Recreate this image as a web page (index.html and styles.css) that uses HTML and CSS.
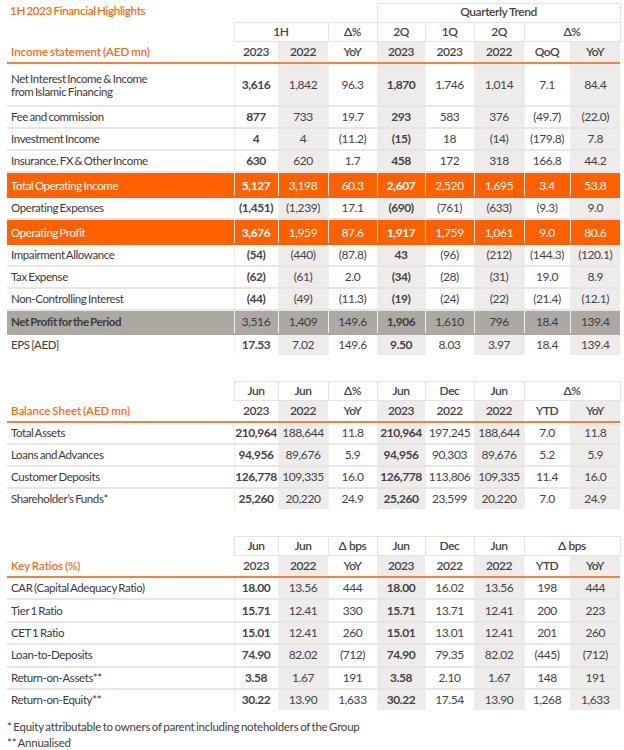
FILE: index.html
```html
<!DOCTYPE html>
<html>
<head>
<meta charset="utf-8">
<link rel="stylesheet" href="styles.css">
</head>
<body>
<div class="page">
<table class="fin">
  <colgroup>
    <col class="c-lbl"><col class="c-a"><col class="c-b"><col class="c-c"><col class="c-d"><col class="c-e"><col class="c-f"><col class="c-g"><col class="c-h">
  </colgroup>
  <tr class="hd1">
    <td colspan="4" class="title">1H 2023 Financial Highlights</td>
    <td colspan="5" class="hbox">Quarterly Trend</td>
  </tr>
  <tr class="hd2">
    <td class="lbl"></td>
    <td colspan="2" class="hbox">1H</td>
    <td class="hbox">Δ%</td>
    <td class="hbox">2Q</td>
    <td class="hbox">1Q</td>
    <td class="hbox">2Q</td>
    <td colspan="2" class="hbox">Δ%</td>
  </tr>
  <tr class="hd3">
    <td class="lbl sect">Income statement (AED mn)</td>
    <td>2023</td><td class="g">2022</td><td>YoY</td><td class="g">2023</td><td>2023</td><td class="g">2022</td><td>QoQ</td><td class="g">YoY</td>
  </tr>
  <tr class="row tall">
    <td class="lbl">Net Interest Income &amp; Income<br>from Islamic Financing</td>
    <td class="b">3,616</td><td class="g">1,842</td><td>96.3</td><td class="g b">1,870</td><td>1.746</td><td class="g">1,014</td><td>7.1</td><td class="g">84.4</td>
  </tr>
  <tr class="row">
    <td class="lbl">Fee and commission</td>
    <td class="b">877</td><td class="g">733</td><td>19.7</td><td class="g b">293</td><td>583</td><td class="g">376</td><td>(49.7)</td><td class="g">(22.0)</td>
  </tr>
  <tr class="row">
    <td class="lbl">Investment Income</td>
    <td class="b">4</td><td class="g">4</td><td>(11.2)</td><td class="g b">(15)</td><td>18</td><td class="g">(14)</td><td>(179.8)</td><td class="g">7.8</td>
  </tr>
  <tr class="row">
    <td class="lbl">Insurance, FX &amp; Other Income</td>
    <td class="b">630</td><td class="g">620</td><td>1.7</td><td class="g b">458</td><td>172</td><td class="g">318</td><td>166.8</td><td class="g">44.2</td>
  </tr>
  <tr class="row hi">
    <td class="lbl">Total Operating Income</td>
    <td class="b">5,127</td><td>3,198</td><td>60.3</td><td class="b">2,607</td><td>2,520</td><td>1,695</td><td>3.4</td><td>53.8</td>
  </tr>
  <tr class="row">
    <td class="lbl">Operating Expenses</td>
    <td class="b">(1,451)</td><td class="g">(1,239)</td><td>17.1</td><td class="g b">(690)</td><td>(761)</td><td class="g">(633)</td><td>(9.3)</td><td class="g">9.0</td>
  </tr>
  <tr class="row hi">
    <td class="lbl">Operating Profit</td>
    <td class="b">3,676</td><td>1,959</td><td>87.6</td><td class="b">1,917</td><td>1,759</td><td>1,061</td><td>9.0</td><td>80.6</td>
  </tr>
  <tr class="row">
    <td class="lbl">Impairment Allowance</td>
    <td class="b">(54)</td><td class="g">(440)</td><td>(87.8)</td><td class="g b">43</td><td>(96)</td><td class="g">(212)</td><td>(144.3)</td><td class="g">(120.1)</td>
  </tr>
  <tr class="row">
    <td class="lbl">Tax Expense</td>
    <td class="b">(62)</td><td class="g">(61)</td><td>2.0</td><td class="g b">(34)</td><td>(28)</td><td class="g">(31)</td><td>19.0</td><td class="g">8.9</td>
  </tr>
  <tr class="row">
    <td class="lbl">Non-Controlling Interest</td>
    <td class="b">(44)</td><td class="g">(49)</td><td>(11.3)</td><td class="g b">(19)</td><td>(24)</td><td class="g">(22)</td><td>(21.4)</td><td class="g">(12.1)</td>
  </tr>
  <tr class="row net">
    <td class="lbl">Net Profit for the Period</td>
    <td>3,516</td><td>1,409</td><td>149.6</td><td class="b">1,906</td><td>1,610</td><td>796</td><td>18.4</td><td>139.4</td>
  </tr>
  <tr class="row last">
    <td class="lbl">EPS [AED]</td>
    <td class="b">17.53</td><td class="g">7.02</td><td>149.6</td><td class="g b">9.50</td><td>8.03</td><td class="g">3.97</td><td>18.4</td><td class="g">139.4</td>
  </tr>
</table>

<table class="fin sec2">
  <colgroup>
    <col class="c-lbl"><col class="c-a"><col class="c-b"><col class="c-c"><col class="c-d"><col class="c-e"><col class="c-f"><col class="c-g"><col class="c-h">
  </colgroup>
  <tr class="hd2">
    <td class="lbl"></td>
    <td class="hbox">Jun</td><td class="hbox">Jun</td><td class="hbox">Δ%</td><td class="hbox">Jun</td><td class="hbox">Dec</td><td class="hbox">Jun</td><td colspan="2" class="hbox">Δ%</td>
  </tr>
  <tr class="hd3">
    <td class="lbl sect">Balance Sheet (AED mn)</td>
    <td>2023</td><td class="g">2022</td><td>YoY</td><td class="g">2023</td><td>2022</td><td class="g">2022</td><td>YTD</td><td class="g">YoY</td>
  </tr>
  <tr class="row">
    <td class="lbl">Total Assets</td>
    <td class="b">210,964</td><td class="g">188,644</td><td>11.8</td><td class="g b">210,964</td><td>197,245</td><td class="g">188,644</td><td>7.0</td><td class="g">11.8</td>
  </tr>
  <tr class="row">
    <td class="lbl">Loans and Advances</td>
    <td class="b">94,956</td><td class="g">89,676</td><td>5.9</td><td class="g b">94,956</td><td>90,303</td><td class="g">89,676</td><td>5.2</td><td class="g">5.9</td>
  </tr>
  <tr class="row">
    <td class="lbl">Customer Deposits</td>
    <td class="b">126,778</td><td class="g">109,335</td><td>16.0</td><td class="g b">126,778</td><td>113,806</td><td class="g">109,335</td><td>11.4</td><td class="g">16.0</td>
  </tr>
  <tr class="row last">
    <td class="lbl">Shareholder’s Funds*</td>
    <td class="b">25,260</td><td class="g">20,220</td><td>24.9</td><td class="g b">25,260</td><td>23,599</td><td class="g">20,220</td><td>7.0</td><td class="g">24.9</td>
  </tr>
</table>

<table class="fin sec3">
  <colgroup>
    <col class="c-lbl"><col class="c-a"><col class="c-b"><col class="c-c"><col class="c-d"><col class="c-e"><col class="c-f"><col class="c-g"><col class="c-h">
  </colgroup>
  <tr class="hd2">
    <td class="lbl"></td>
    <td class="hbox">Jun</td><td class="hbox">Jun</td><td class="hbox">Δ bps</td><td class="hbox">Jun</td><td class="hbox">Dec</td><td class="hbox">Jun</td><td colspan="2" class="hbox">Δ bps</td>
  </tr>
  <tr class="hd3">
    <td class="lbl sect">Key Ratios (%)</td>
    <td>2023</td><td class="g">2022</td><td>YoY</td><td class="g">2023</td><td>2022</td><td class="g">2022</td><td>YTD</td><td class="g">YoY</td>
  </tr>
  <tr class="row">
    <td class="lbl">CAR (Capital Adequacy Ratio)</td>
    <td class="b">18.00</td><td class="g">13.56</td><td>444</td><td class="g b">18.00</td><td>16.02</td><td class="g">13.56</td><td>198</td><td class="g">444</td>
  </tr>
  <tr class="row">
    <td class="lbl">Tier 1 Ratio</td>
    <td class="b">15.71</td><td class="g">12.41</td><td>330</td><td class="g b">15.71</td><td>13.71</td><td class="g">12.41</td><td>200</td><td class="g">223</td>
  </tr>
  <tr class="row">
    <td class="lbl">CET 1 Ratio</td>
    <td class="b">15.01</td><td class="g">12.41</td><td>260</td><td class="g b">15.01</td><td>13.01</td><td class="g">12.41</td><td>201</td><td class="g">260</td>
  </tr>
  <tr class="row">
    <td class="lbl">Loan-to-Deposits</td>
    <td class="b">74.90</td><td class="g">82.02</td><td>(712)</td><td class="g b">74.90</td><td>79.35</td><td class="g">82.02</td><td>(445)</td><td class="g">(712)</td>
  </tr>
  <tr class="row">
    <td class="lbl">Return-on-Assets**</td>
    <td class="b">3.58</td><td class="g">1.67</td><td>191</td><td class="g b">3.58</td><td>2.10</td><td class="g">1.67</td><td>148</td><td class="g">191</td>
  </tr>
  <tr class="row last">
    <td class="lbl">Return-on-Equity**</td>
    <td class="b">30.22</td><td class="g">13.90</td><td>1,633</td><td class="g b">30.22</td><td>17.54</td><td class="g">13.90</td><td>1,268</td><td class="g">1,633</td>
  </tr>
</table>

<div class="notes">
  <p>* Equity attributable to owners of parent including noteholders of the Group</p>
  <p>** Annualised</p>
</div>
</div>
</body>
</html>
```

FILE: styles.css
```css
body {
  margin: 0;
  background: #ffffff;
  font-family: Lato, "Open Sans", sans-serif;
  color: #3f3f3f;
}
.page {
  padding: 3px 4px 0 7px;
}
.fin {
  border-collapse: collapse;
  table-layout: fixed;
  width: 613px;
}
.c-lbl { width: 227px; }
.c-a { width: 44px; }
.c-b { width: 50px; }
.c-c { width: 49px; }
.c-d { width: 48px; }
.c-e { width: 49px; }
.c-f { width: 50px; }
.c-g { width: 46px; }
.c-h { width: 50px; }

.fin td {
  padding: 0;
  font-size: 12px;
  line-height: 14px;
  text-align: center;
  vertical-align: middle;
  letter-spacing: -0.45px;
  white-space: nowrap;
}
.fin td.lbl {
  text-align: left;
  padding-left: 4px;
  font-size: 11.5px;
  letter-spacing: -0.4px;
  word-spacing: -1px;
  color: #3a3a3a;
}
.fin td.title {
  text-align: left;
  padding-left: 3px;
  color: #ff6a13;
  font-weight: 600;
  font-size: 11.7px;
  line-height: 12px;
  letter-spacing: -0.4px;
  word-spacing: -1px;
  height: 18px;
  vertical-align: top;
}
.hbox {
  border: 1px solid #e4e4e4;
  font-weight: 600;
  color: #444;
}
.fin .hd1 td.hbox { vertical-align: top; line-height: 15px; }
.hd1 td { height: 18px; }
.hd2 td { height: 18px; }
.hd3 td {
  height: 20px;
  font-weight: 600;
  color: #444;
  border-bottom: 2px solid #f58040;
}
.fin .hd3 td.sect {
  color: #ff6a13;
  font-size: 11.6px;
  letter-spacing: -0.1px;
  word-spacing: -0.8px;
}
.g { background: #eeecea; }
.b { font-weight: 700; }

.row td {
  height: 20px;
  border-bottom: 2px solid #e8e6e3;
  color: #444;
}
.row td:not(.lbl) {
  border-left: 1px solid #efefef;
}
.row.tall td { height: 41px; }
.fin .row.tall td.lbl { line-height: 13px; }
.fin .row.hi td {
  background: #ff6000;
  color: #ffffff;
  height: 21px;
  padding-top: 2px;
  border-bottom-color: #ff6000;
}
.row.net td {
  background: #aca9a3;
  color: #3d3d3d;
  height: 22px;
  border-bottom-color: #aca9a3;
}
.row.net td.lbl { font-weight: 700; }
.row.last td { border-bottom: none; }

.sec2 { margin-top: 26px; }
.sec3 { margin-top: 27px; }
.sec3 .row td { height: 20.4px; }

.notes {
  margin-top: 9px;
  font-size: 11.5px;
  color: #404040;
  letter-spacing: -0.25px;
  word-spacing: -1px;
}
.notes p {
  margin: 0;
  line-height: 16px;
}
```
